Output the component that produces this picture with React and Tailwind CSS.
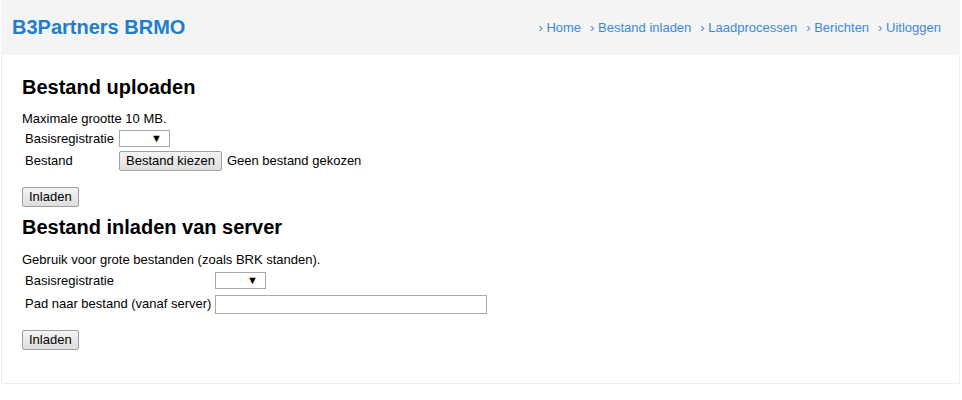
import React from 'react';

const nav = ['Home', 'Bestand inladen', 'Laadprocessen', 'Berichten', 'Uitloggen'];

function FakeSelect({ className = '' }) {
    return (
        <div className={`relative h-[17px] w-[51px] border border-[#a9a9a9] bg-white ${className}`}>
            <span className="absolute right-[7px] top-0 text-[11px] leading-[15px] text-black">▼</span>
        </div>
    );
}

function Knop({ children }) {
    return (
        <button className="h-[20px] border border-[#a0a0a0] bg-gradient-to-b from-[#f4f4f4] to-[#dedede] px-[6px] text-[13px] leading-[16px] text-black rounded-[2px]">
            {children}
        </button>
    );
}

export default function App() {
    return (
        <div className="mx-px w-[959px] bg-white text-[13px] text-black" style={{ fontFamily: '"Liberation Sans", Arial, sans-serif' }}>

            {/* HEADER */}
            <div className="flex h-[55px] items-center justify-between bg-[#f4f4f4] pl-[11px] pr-[19px]">
                <h1 className="text-[20px] font-bold leading-[23px] text-[#1e7ecd]">B3Partners BRMO</h1>
                <div className="flex gap-[9px] text-[13px] leading-[15px] text-[#3d8ad5]">
                    {nav.map((n) => (
                        <span key={n}><span className="text-[#5f86c8]">›</span> {n}</span>
                    ))}
                </div>
            </div>

            {/* CONTENT */}
            <div className="h-[329px] border border-t-0 border-[#eeeeee] px-[20px] pt-[21px]">

                <h2 className="text-[20px] font-bold leading-[23px]">Bestand uploaden</h2>
                <p className="mt-[12px] leading-[15px]">Maximale grootte 10 MB.</p>
                <div className="mt-[2px] flex h-[21px] items-center">
                    <span className="w-[97px] pl-[3px]">Basisregistratie</span>
                    <FakeSelect />
                </div>
                <div className="mt-[1px] flex h-[22px] items-center">
                    <span className="w-[97px] pl-[3px]">Bestand</span>
                    <Knop>Bestand kiezen</Knop>
                    <span className="ml-[5px]">Geen bestand gekozen</span>
                </div>
                <div className="mt-[15px]">
                    <Knop>Inladen</Knop>
                </div>

                <h2 className="mt-[9px] text-[20px] font-bold leading-[23px]">Bestand inladen van server</h2>
                <p className="mt-[13px] leading-[15px]">Gebruik voor grote bestanden (zoals BRK standen).</p>
                <div className="mt-[3px] flex h-[21px] items-center">
                    <span className="w-[193px] pl-[3px]">Basisregistratie</span>
                    <FakeSelect />
                </div>
                <div className="mt-[2px] flex h-[22px] items-center">
                    <span className="w-[193px] pl-[3px]">Pad naar bestand (vanaf server)</span>
                    <input type="text" className="h-[19px] w-[272px] border border-[#a9a9a9] bg-white outline-none" />
                </div>
                <div className="mt-[15px]">
                    <Knop>Inladen</Knop>
                </div>
            </div>
        </div>
    );
}
